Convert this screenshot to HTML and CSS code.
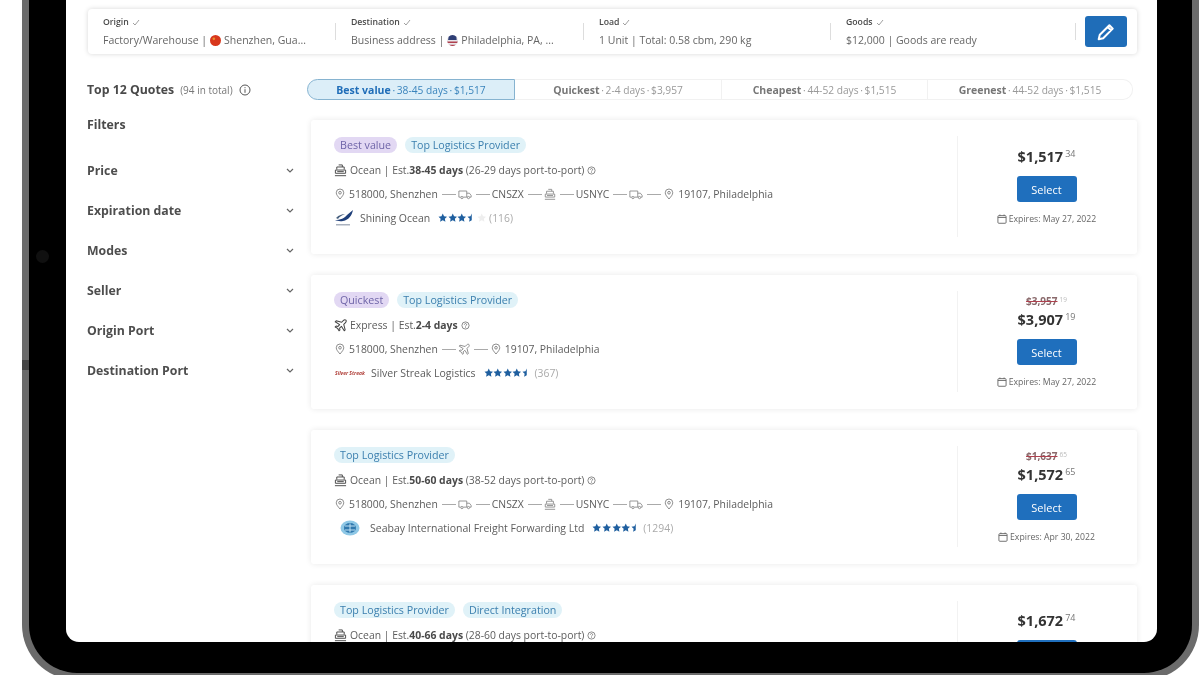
FILE: index.html
```html
<!DOCTYPE html>
<html lang="en">
<head>
<meta charset="utf-8">
<title>Top 12 Quotes</title>
<link rel="stylesheet" href="styles.css">
</head>
<body>
<svg class="defs" width="0" height="0" aria-hidden="true">
  <symbol id="i-ship" viewBox="0 0 14 14" fill="none" stroke="currentColor" stroke-width="1">
    <path d="M5 1h4v2.200M3 6V3.200h8V6M1.500 6.500h11v3.500h-11zM1 12.600h12M3.500 8.200h7"/>
  </symbol>
  <symbol id="i-truck" viewBox="0 0 16 12" fill="none" stroke="currentColor" stroke-width="1">
    <path d="M3 9H1V2h9v7H6M10 4.500h3l2 2.500v2h-1.500M10 9h.8"/>
    <circle cx="4.500" cy="9.500" r="1.300"/><circle cx="12" cy="9.500" r="1.300"/>
  </symbol>
  <symbol id="i-plane" viewBox="0 0 14 14" fill="none" stroke="currentColor" stroke-width="1.100" stroke-linejoin="round">
    <path d="M12.800 1.200c-.8-.6-1.900-.3-2.600.4L8.300 3.500 2.300 2 1.300 3l4.800 3L4.300 8l-2-.4-1 1 2.600 1.500L5.400 12.700l1-1-.4-2 2-1.800 3 4.800 1-1-1.500-6 1.900-1.900c.7-.7 1-1.800.4-2.600z"/>
  </symbol>
  <symbol id="i-pin" viewBox="0 0 12 14" fill="none" stroke="currentColor" stroke-width="1">
    <path d="M6 13C3.500 10 1.500 7.800 1.500 5.500a4.500 4.500 0 0 1 9 0C10.500 7.800 8.500 10 6 13z"/><circle cx="6" cy="5.500" r="1.600"/>
  </symbol>
  <symbol id="i-help" viewBox="0 0 12 12" fill="none" stroke="currentColor" stroke-width="1">
    <circle cx="6" cy="6" r="4.800"/><path d="M4.500 4.800a1.500 1.500 0 1 1 2.300 1.300c-.6.400-.8.600-.8 1.200M6 8.300v.9"/>
  </symbol>
  <symbol id="i-info" viewBox="0 0 12 12" fill="none" stroke="currentColor" stroke-width="1">
    <circle cx="6" cy="6" r="5"/><path d="M6 5.200v3.600M6 3.200v1"/>
  </symbol>
  <symbol id="i-cal" viewBox="0 0 11 11" fill="none" stroke="currentColor" stroke-width="1">
    <rect x="1" y="1.800" width="9" height="8.400" rx="1"/><path d="M1 3.800h9M3.200 .6v1.500M7.800 .6v1.500"/>
  </symbol>
  <symbol id="i-chev" viewBox="0 0 8 5" fill="none" stroke="currentColor" stroke-width="1.200">
    <path d="M1 1l3 3 3-3"/>
  </symbol>
  <symbol id="i-check" viewBox="0 0 8 7" fill="none" stroke="currentColor" stroke-width=".8">
    <path d="M1 4l2 2 4-5"/>
  </symbol>
  <symbol id="i-pencil" viewBox="0 0 16 16" fill="none" stroke="currentColor" stroke-width="1.800" stroke-linejoin="round">
    <path d="M1.500 14.500l1-4L11 2l3 3-8.500 8.500zM9.500 3.500l3 3"/>
  </symbol>
  <symbol id="i-star" viewBox="0 0 10 10" fill="currentColor">
    <path d="M5 .6l1.350 2.900 3.150.4-2.300 2.150.6 3.150L5 7.700 2.200 9.200l.6-3.150L.5 3.900l3.150-.4z"/>
  </symbol>
  <symbol id="i-half" viewBox="0 0 10 10" fill="currentColor">
    <path d="M5 .6v7.100L2.200 9.200l.6-3.150L.5 3.900l3.150-.4z"/>
  </symbol>
</svg>

<div class="device">
  <span class="camera"></span>
  <span class="notch"></span>
  <div class="screen">
    <section class="summary">
      <div class="seg">
        <div class="seg-body">
          <div class="seg-label">Origin <svg class="check"><use href="#i-check"/></svg></div>
          <div class="seg-value">Factory/Warehouse | <svg class="flag" viewBox="0 0 10 10"><circle cx="5" cy="5" r="5" fill="#d8371c"/><circle cx="3.500" cy="3.500" r="1.200" fill="#e8902c"/></svg> Shenzhen, Gua...</div>
        </div>
        <span class="sep"></span>
      </div>
      <div class="seg">
        <div class="seg-body">
          <div class="seg-label">Destination <svg class="check"><use href="#i-check"/></svg></div>
          <div class="seg-value">Business address | <svg class="flag" viewBox="0 0 10 10"><circle cx="5" cy="5" r="5" fill="#e9e6ea"/><path d="M.2 6h9.600l-.6 1.300H.8zM2 8.800h6A5 5 0 0 1 2 8.800z" fill="#b0404e"/><path d="M1.500 1.500a5 5 0 0 1 7 0L8.800 4.500H1z" fill="#2f3f75"/></svg> Philadelphia, PA, ...</div>
        </div>
        <span class="sep"></span>
      </div>
      <div class="seg">
        <div class="seg-body">
          <div class="seg-label">Load <svg class="check"><use href="#i-check"/></svg></div>
          <div class="seg-value">1 Unit | Total: 0.58 cbm, 290 kg</div>
        </div>
        <span class="sep"></span>
      </div>
      <div class="seg">
        <div class="seg-body">
          <div class="seg-label">Goods <svg class="check"><use href="#i-check"/></svg></div>
          <div class="seg-value">$12,000 | Goods are ready</div>
        </div>
        <span class="sep"></span>
      </div>
      <button class="edit" type="button" aria-label="Edit"><svg class="pencil"><use href="#i-pencil"/></svg></button>
    </section>

    <div class="main">
      <aside class="side">
        <div class="side-head">
          <span class="side-title">Top 12 Quotes</span>
          <span class="side-count">(94 in total)</span>
          <svg class="info"><use href="#i-info"/></svg>
        </div>
        <div class="filters-title">Filters</div>
        <div class="filter"><span>Price</span><svg class="chev"><use href="#i-chev"/></svg></div>
        <div class="filter"><span>Expiration date</span><svg class="chev"><use href="#i-chev"/></svg></div>
        <div class="filter"><span>Modes</span><svg class="chev"><use href="#i-chev"/></svg></div>
        <div class="filter"><span>Seller</span><svg class="chev"><use href="#i-chev"/></svg></div>
        <div class="filter"><span>Origin Port</span><svg class="chev"><use href="#i-chev"/></svg></div>
        <div class="filter"><span>Destination Port</span><svg class="chev"><use href="#i-chev"/></svg></div>
      </aside>

      <div class="results">
        <div class="tabs">
          <div class="tab tab-on"><b>Best value</b>&thinsp;·&thinsp;38-45 days&thinsp;·&thinsp;$1,517</div>
          <div class="tab"><b>Quickest</b>&thinsp;·&thinsp;2-4 days&thinsp;·&thinsp;$3,957</div>
          <div class="tab"><b>Cheapest</b>&thinsp;·&thinsp;44-52 days&thinsp;·&thinsp;$1,515</div>
          <div class="tab"><b>Greenest</b>&thinsp;·&thinsp;44-52 days&thinsp;·&thinsp;$1,515</div>
        </div>

        <article class="card">
          <div class="info-col">
            <div class="tags"><span class="tag tag-p">Best value</span><span class="tag">Top Logistics Provider</span></div>
            <div class="row"><svg class="ic-mode"><use href="#i-ship"/></svg><span>Ocean | Est.<b>38-45 days</b> (26-29 days port-to-port)</span><svg class="help"><use href="#i-help"/></svg></div>
            <div class="row">
              <svg class="pin"><use href="#i-pin"/></svg><span>518000, Shenzhen</span><i class="dash"></i><svg class="truck"><use href="#i-truck"/></svg><i class="dash"></i><span>CNSZX</span><i class="dash"></i><svg class="ship"><use href="#i-ship"/></svg><i class="dash"></i><span>USNYC</span><i class="dash"></i><svg class="truck"><use href="#i-truck"/></svg><i class="dash"></i><svg class="pin"><use href="#i-pin"/></svg><span>19107, Philadelphia</span>
            </div>
            <div class="row">
              <svg class="logo-so" viewBox="0 0 20 18"><path d="M1 11C6 11 11 9 13 6L19 1c-1 5-4 10-10 11-3 .5-6 0-8-1z" fill="#1f3f7a"/><path d="M2 9c3-3 6-4 9-4-3 1-6 3-7 5z" fill="#48617f"/><rect x="2" y="15" width="14" height="1.500" fill="#aab2bf"/></svg>
              <span class="seller-name">Shining Ocean</span>
              <span class="stars"><svg class="star"><use href="#i-star"/></svg><svg class="star"><use href="#i-star"/></svg><svg class="star"><use href="#i-star"/></svg><svg class="star"><use href="#i-half"/></svg><svg class="star star-off"><use href="#i-star"/></svg></span>
              <span class="count">(116)</span>
            </div>
          </div>
          <div class="price-col">
            <div class="price">$1,517<sup>34</sup></div>
            <button class="select" type="button">Select</button>
            <div class="expires"><svg class="cal"><use href="#i-cal"/></svg>Expires: May 27, 2022</div>
          </div>
        </article>

        <article class="card">
          <div class="info-col">
            <div class="tags"><span class="tag tag-p">Quickest</span><span class="tag">Top Logistics Provider</span></div>
            <div class="row"><svg class="ic-mode"><use href="#i-plane"/></svg><span>Express | Est.<b>2-4 days</b></span><svg class="help"><use href="#i-help"/></svg></div>
            <div class="row">
              <svg class="pin"><use href="#i-pin"/></svg><span>518000, Shenzhen</span><i class="dash"></i><svg class="ship"><use href="#i-plane"/></svg><i class="dash"></i><svg class="pin"><use href="#i-pin"/></svg><span>19107, Philadelphia</span>
            </div>
            <div class="row">
              <span class="logo-ss">Silver Streak</span>
              <span class="seller-name">Silver Streak Logistics</span>
              <span class="stars"><svg class="star"><use href="#i-star"/></svg><svg class="star"><use href="#i-star"/></svg><svg class="star"><use href="#i-star"/></svg><svg class="star"><use href="#i-star"/></svg><svg class="star"><use href="#i-half"/></svg></span>
              <span class="count">(367)</span>
            </div>
          </div>
          <div class="price-col">
            <div class="old"><span class="struck">$3,957</span><sup>19</sup></div>
            <div class="price">$3,907<sup>19</sup></div>
            <button class="select" type="button">Select</button>
            <div class="expires"><svg class="cal"><use href="#i-cal"/></svg>Expires: May 27, 2022</div>
          </div>
        </article>

        <article class="card">
          <div class="info-col">
            <div class="tags"><span class="tag">Top Logistics Provider</span></div>
            <div class="row"><svg class="ic-mode"><use href="#i-ship"/></svg><span>Ocean | Est.<b>50-60 days</b> (38-52 days port-to-port)</span><svg class="help"><use href="#i-help"/></svg></div>
            <div class="row">
              <svg class="pin"><use href="#i-pin"/></svg><span>518000, Shenzhen</span><i class="dash"></i><svg class="truck"><use href="#i-truck"/></svg><i class="dash"></i><span>CNSZX</span><i class="dash"></i><svg class="ship"><use href="#i-ship"/></svg><i class="dash"></i><span>USNYC</span><i class="dash"></i><svg class="truck"><use href="#i-truck"/></svg><i class="dash"></i><svg class="pin"><use href="#i-pin"/></svg><span>19107, Philadelphia</span>
            </div>
            <div class="row">
              <svg class="logo-sb" viewBox="0 0 20 18"><ellipse cx="10" cy="9" rx="9.500" ry="7.500" fill="#8fc8e6"/><ellipse cx="10" cy="9" rx="6" ry="5" fill="#2f78ad"/><path d="M5 7h10M5 11h10M10 4.500v9" stroke="#bfe0f2" stroke-width="1"/></svg>
              <span class="seller-name">Seabay International Freight Forwarding Ltd</span>
              <span class="stars"><svg class="star"><use href="#i-star"/></svg><svg class="star"><use href="#i-star"/></svg><svg class="star"><use href="#i-star"/></svg><svg class="star"><use href="#i-star"/></svg><svg class="star"><use href="#i-half"/></svg></span>
              <span class="count">(1294)</span>
            </div>
          </div>
          <div class="price-col">
            <div class="old"><span class="struck">$1,637</span><sup>65</sup></div>
            <div class="price">$1,572<sup>65</sup></div>
            <button class="select" type="button">Select</button>
            <div class="expires"><svg class="cal"><use href="#i-cal"/></svg>Expires: Apr 30, 2022</div>
          </div>
        </article>

        <article class="card">
          <div class="info-col">
            <div class="tags"><span class="tag">Top Logistics Provider</span><span class="tag">Direct Integration</span></div>
            <div class="row"><svg class="ic-mode"><use href="#i-ship"/></svg><span>Ocean | Est.<b>40-66 days</b> (28-60 days port-to-port)</span><svg class="help"><use href="#i-help"/></svg></div>
          </div>
          <div class="price-col price-col-top">
            <div class="price">$1,672<sup>74</sup></div>
            <button class="select" type="button">Select</button>
          </div>
        </article>
      </div>
    </div>
  </div>
</div>
</body>
</html>
```
FILE: styles.css
```css
* { box-sizing: border-box; }
html, body { margin: 0; height: 675px; overflow: hidden; background: #fff; }
body { font-family: "Open Sans", "Liberation Sans", sans-serif; color: #555; font-size: 10px; }
.defs { display: block; height: 0; }
svg { display: block; flex: none; }

.device {
  position: relative;
  margin-left: 22px;
  width: 1177px;
  height: 680px;
  padding: 0 35px 0 37px;
  background: #000;
  border: 7px solid #6b6b6b;
  border-top: 0;
  border-radius: 0 0 55px 55px;
}
.camera { position: absolute; left: 7px; top: 250px; width: 13px; height: 13px; border-radius: 50%; background: #101010; }
.notch { position: absolute; left: -7px; top: 360px; width: 7px; height: 10px; background: #454545; }

.screen {
  height: 642px;
  overflow: hidden;
  background: #fff;
  border-radius: 0 0 13px 13px;
  padding: 9px 20px 0 22px;
  filter: blur(.4px);
}

/* summary */
.summary {
  display: grid;
  grid-template-columns: 248px 248px 247px 245px 42px;
  align-items: center;
  height: 45px;
  border-radius: 4px;
  background: #fff;
  box-shadow: 0 0 5px rgba(0,0,0,.16);
}
.seg { display: flex; align-items: center; justify-content: space-between; padding-left: 15px; }
.seg-body { margin-bottom: 2px; }
.seg-label { display: flex; align-items: center; gap: 3px; margin-top: 2px; font-size: 8.700px; line-height: 11px; font-weight: 600; color: #4a4a4a; }
.seg-value { display: flex; align-items: center; gap: 3px; margin-top: 6px; font-size: 10.500px; line-height: 13px; color: #666; white-space: nowrap; }
.check { width: 8px; height: 7px; color: #888; }
.flag { width: 11px; height: 11px; }
.sep { width: 1px; height: 17px; background: #ddd; }
.edit {
  width: 42px; height: 31px; margin-left: 9px; padding: 0; border: 0; border-radius: 3px;
  background: #1f6db8; color: #fff;
  display: flex; align-items: center; justify-content: center;
}
.pencil { width: 18px; height: 18px; }

/* main */
.main { display: grid; grid-template-columns: 219px 826px; margin-top: 25px; }
.side { padding-right: 11px; }
.side-head { display: flex; align-items: center; height: 21px; gap: 6px; }
.side-title { font-size: 12.300px; font-weight: 700; color: #4a4a4a; margin-left: -1px; }
.side-count { font-size: 10px; color: #777; }
.info { width: 12px; height: 12px; color: #555; }
.filters-title { margin: 15px 0 15px -1px; height: 20px; line-height: 20px; font-size: 12.300px; font-weight: 700; color: #4a4a4a; }
.filter {
  display: flex; align-items: center; justify-content: space-between;
  height: 40px; margin-left: -1px; font-size: 12.300px; font-weight: 700; color: #4e4e4e;
}
.chev { width: 8px; height: 5px; color: #666; margin-right: 2px; }

/* tabs */
.tabs { display: grid; grid-template-columns: 208px 207px 206px 205px; height: 21px; }
.tab {
  display: flex; align-items: center; justify-content: center;
  font-size: 10.200px; color: #999; white-space: pre;
  border: 1px solid #f1f1f1; border-left: 0;
}
.tab:last-child { border-radius: 0 10px 10px 0; }
.tab b { color: #777; font-weight: 700; font-size: 10.500px; }
.tab-on {
  background: #dceef8; color: #3a84bc;
  border: 1px solid #86b3d0; border-radius: 11px 0 0 11px;
}
.tab-on b { color: #1f6db8; }

/* cards */
.card {
  display: flex;
  width: 826px;
  height: 134px;
  margin: 21px 0 0 4px;
  background: #fff;
  box-shadow: 0 0 6px rgba(0,0,0,.09);
  border-radius: 3px;
}
.tabs + .card { margin-top: 20px; }
.info-col { flex: 1; min-width: 0; padding: 17px 0 0 23px; }
.tags { display: flex; gap: 8px; height: 21px; }
.tag {
  display: flex; align-items: center; height: 16px; padding: 0 6px; border-radius: 8px;
  font-size: 10.700px; color: #3b7fae; background: #e0f2f8; white-space: nowrap;
}
.tag-p { background: #e2d8f3; color: #6f65a8; }
.row { display: flex; align-items: center; height: 24px; font-size: 10.400px; color: #5c5c5c; white-space: nowrap; }
.row b { font-weight: 700; color: #4a4a4a; }
.ic-mode { width: 13px; height: 13px; margin-right: 3px; color: #444; }
.help { width: 9px; height: 9px; margin-left: 3px; color: #666; }
.pin { width: 10px; height: 12px; margin: 0 4px 0 1px; color: #777; }
.dash { display: block; width: 14px; height: 1px; margin: 0 2px 0 4px; background: #aaa; }
.truck { width: 14px; height: 11px; color: #888; }
.ship { width: 12px; height: 13px; color: #888; }
.logo-so { width: 20px; height: 18px; margin-right: 6px; }
.logo-sb { width: 20px; height: 18px; margin: 0 10px 0 6px; }
.logo-ss { display: block; width: 30px; margin: 0 6px 0 1px; font-size: 5px; font-style: italic; font-weight: 700; color: #b0403a; white-space: nowrap; overflow: hidden; }
.seller-name { margin-right: 8px; font-size: 10.500px; color: #5c5c5c; }
.stars { display: flex; gap: .1px; color: #1f5f9f; }
.star { width: 9.500px; height: 9.500px; }
.star-off { color: #eee; }
.count { margin-left: 3px; color: #aaa; }

.price-col {
  flex: none; width: 180px; margin: 16px 0 17px; padding-right: 2px;
  border-left: 1px solid #f2f2f2;
  display: flex; flex-direction: column; align-items: center; justify-content: center;
}
.price-col-top { justify-content: flex-start; margin-bottom: 0; padding-top: 11px; }
.price { font-size: 14.500px; line-height: 18px; font-weight: 700; color: #333; }
.price sup { margin-left: 2px; font-size: 9px; font-weight: 400; color: #777; vertical-align: 5px; line-height: 0; }
.old { font-size: 10px; line-height: 12px; margin-bottom: 4px; font-weight: 700; color: #8a6a6c; }
.struck { text-decoration: line-through; text-decoration-color: #b0404e; }
.old sup { font-size: 6.500px; font-weight: 400; margin-left: 2px; color: #bbb; vertical-align: 3px; line-height: 0; }
.select {
  width: 60px; height: 26px; margin-top: 10px; padding: 0; border: 0; border-radius: 3px;
  background: #1f6fbd; color: #fff; font: 11px "Open Sans", sans-serif;
}
.expires { display: flex; align-items: center; gap: 2px; margin-top: 11px; font-size: 8.700px; color: #666; white-space: nowrap; }
.cal { width: 10px; height: 10px; color: #666; }
```
